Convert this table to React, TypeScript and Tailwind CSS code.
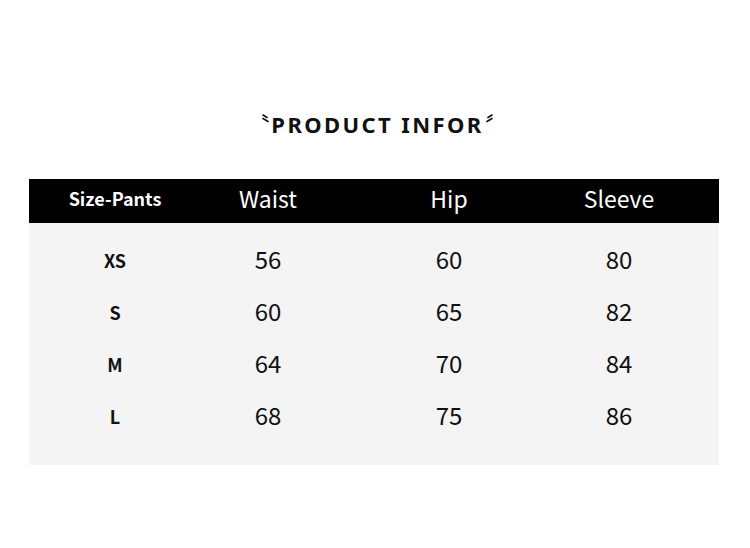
const rows = [
  { size: 'XS', waist: 56, hip: 60, sleeve: 80 },
  { size: 'S', waist: 60, hip: 65, sleeve: 82 },
  { size: 'M', waist: 64, hip: 70, sleeve: 84 },
  { size: 'L', waist: 68, hip: 75, sleeve: 86 },
];

function Tick({ flip }: { flip?: boolean }) {
  return (
    <svg width="8" height="9" viewBox="0 0 8 9" className={flip ? '-scale-x-100' : ''}>
      <path d="M1 1 L5 3.5 M1 4.5 L6 7.5" stroke="#111" strokeWidth="1.6" strokeLinecap="round" fill="none" />
    </svg>
  );
}

const cols = 'grid grid-cols-[172px_134px_228px_112px] items-center text-center';

export default function App() {
  return (
    <div className="h-[548px] w-[750px] bg-white font-['Noto_Sans_CJK_SC',sans-serif]">
      {/* Title */}
      <div className="flex items-start justify-center pt-[108px] pl-[5px]">
        <div className="mt-[6px]">
          <Tick />
        </div>
        <h1 className="mx-[1px] font-['Noto_Sans',sans-serif] text-[22px] font-bold leading-[32px] tracking-[2.4px] text-[#111]">
          PRODUCT INFOR
        </h1>
        <div className="mt-[6px]">
          <Tick flip />
        </div>
      </div>

      {/* Table */}
      <div className="ml-[29px] mt-[39px] w-[690px]">
        <div className={`${cols} h-[44px] bg-black pb-[5px] text-white`}>
          <div className="text-[18px] font-bold">Size-Pants</div>
          <div className="text-[23px]">Waist</div>
          <div className="text-[23px]">Hip</div>
          <div className="text-[23px]">Sleeve</div>
        </div>
        <div className="bg-[#f4f4f4] pt-[10px] pb-[24px]">
          {rows.map((r) => (
            <div key={r.size} className={`${cols} h-[52px] text-[#111]`}>
              <div className="pt-[3px] text-[18px] font-bold">{r.size}</div>
              <div className="text-[24px]">{r.waist}</div>
              <div className="text-[24px]">{r.hip}</div>
              <div className="text-[24px]">{r.sleeve}</div>
            </div>
          ))}
        </div>
      </div>
    </div>
  );
}
